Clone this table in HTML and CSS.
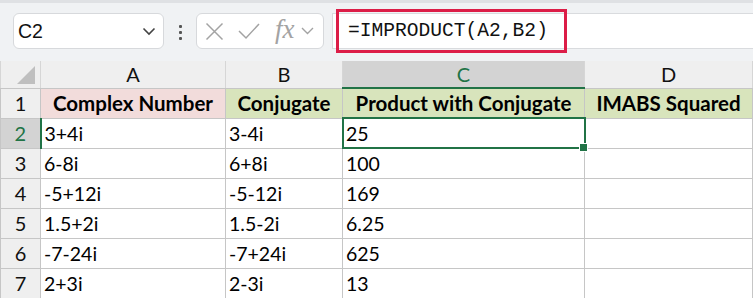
FILE: index.html
```html
<!DOCTYPE html>
<html>
<head>
<meta charset="utf-8">
<link rel="stylesheet" href="styles.css">
</head>
<body>
<div class="toolbar">
  <div class="namebox">
    <span class="nb-text">C2</span>
    <svg class="chev" width="14" height="9" viewBox="0 0 14 9"><path d="M1.5 1.5 L7 7 L12.5 1.5" fill="none" stroke="#444" stroke-width="1.6"/></svg>
  </div>
  <div class="dots"><i></i><i></i><i></i></div>
  <div class="fxbox">
    <svg width="19" height="19" viewBox="0 0 19 19"><path d="M1.5 1.5 L17.5 17.5 M17.5 1.5 L1.5 17.5" stroke="#a3a3a3" stroke-width="1.5" fill="none"/></svg>
    <svg width="22" height="18" viewBox="0 0 22 18"><path d="M1 9 L8 16 L21 2" stroke="#a3a3a3" stroke-width="1.5" fill="none"/></svg>
    <span class="fx">fx</span>
    <svg class="fxchev" width="13" height="8" viewBox="0 0 13 8"><path d="M1 1 L6.5 6.5 L12 1" fill="none" stroke="#a3a3a3" stroke-width="1.4"/></svg>
  </div>
  <div class="formula">
    <div class="formula-hl">=IMPRODUCT(A2,B2)</div>
  </div>
</div>
<table class="sheet">
  <colgroup>
    <col class="c-rh"><col class="c-a"><col class="c-b"><col class="c-c"><col class="c-d"><col class="c-e">
  </colgroup>
  <tr class="colhead">
    <th class="corner"><span class="tri"></span></th>
    <th>A</th><th>B</th><th class="sel">C</th><th>D</th><th></th>
  </tr>
  <tr>
    <th class="rh">1</th>
    <td class="hd pink">Complex Number</td>
    <td class="hd green">Conjugate</td>
    <td class="hd green">Product with Conjugate</td>
    <td class="hd green">IMABS Squared</td>
    <td></td>
  </tr>
  <tr>
    <th class="rh sel">2</th>
    <td>3+4i</td><td>3-4i</td><td class="active">25<span class="handle"></span></td><td></td><td></td>
  </tr>
  <tr>
    <th class="rh">3</th>
    <td>6-8i</td><td>6+8i</td><td>100</td><td></td><td></td>
  </tr>
  <tr>
    <th class="rh">4</th>
    <td>-5+12i</td><td>-5-12i</td><td>169</td><td></td><td></td>
  </tr>
  <tr>
    <th class="rh">5</th>
    <td>1.5+2i</td><td>1.5-2i</td><td>6.25</td><td></td><td></td>
  </tr>
  <tr>
    <th class="rh">6</th>
    <td>-7-24i</td><td>-7+24i</td><td>625</td><td></td><td></td>
  </tr>
  <tr>
    <th class="rh">7</th>
    <td>2+3i</td><td>2-3i</td><td>13</td><td></td><td></td>
  </tr>
</table>
</body>
</html>
```
FILE: styles.css
```css
* { box-sizing: border-box; }
html, body { margin: 0; padding: 0; }
body {
  width: 753px;
  height: 298px;
  overflow: hidden;
  background: #ffffff;
  font-family: Lato, "Open Sans", sans-serif;
}
.toolbar {
  height: 61px;
  background: #f0f2f4;
  border-top: 3px solid #dfe1e4;
  display: flex;
  align-items: flex-start;
  padding-top: 10px;
  padding-left: 13px;
}
.namebox {
  width: 151px;
  height: 36px;
  background: #fff;
  border: 1px solid #d7d9dc;
  border-radius: 6px;
  display: flex;
  align-items: center;
  justify-content: space-between;
  padding: 0 7px 0 4px;
  font-family: "Liberation Sans", Arial, sans-serif;
  font-size: 19.5px;
  color: #111;
}
.dots {
  width: 32px;
  display: flex;
  flex-direction: column;
  align-items: center;
  gap: 3px;
  padding-top: 12px;
}
.dots i { display: block; width: 3px; height: 3px; background: #555; border-radius: 1px; }
.fxbox {
  width: 128px;
  height: 36px;
  background: #fff;
  border: 1px solid #d7d9dc;
  border-radius: 6px;
  display: flex;
  align-items: center;
  padding-left: 8px;
  gap: 14px;
}
.fx {
  font-family: "Liberation Serif", serif;
  font-style: italic;
  font-size: 27px;
  line-height: 1;
  color: #a3a3a3;
  margin-left: 1px;
  margin-top: -3px;
}
.fxchev { margin-left: -8px; }
.formula {
  flex: 1;
  margin-left: 8px;
  height: 36px;
  background: #fff;
  border-top: 1px solid #d9dbde;
  border-bottom: 1px solid #d9dbde;
  border-left: 1px solid #d9dbde;
  position: relative;
}
.formula-hl {
  position: absolute;
  left: 3px;
  top: -5px;
  width: 231px;
  height: 44px;
  border: 3px solid #dc1d47;
  font-family: "Liberation Mono", "DejaVu Sans Mono", monospace;
  font-size: 19.6px;
  color: #111;
  padding-left: 9px;
  line-height: 38px;
}
.sheet {
  border-collapse: collapse;
  table-layout: fixed;
  width: 760px;
}
.c-rh { width: 40px; }
.c-a { width: 185px; }
.c-b { width: 117px; }
.c-c { width: 242px; }
.c-d { width: 168px; }
.c-e { width: 8px; }
.sheet th, .sheet td {
  border: 1px solid #c6c6c6;
  padding: 0;
  white-space: nowrap;
  overflow: hidden;
}
.colhead th {
  height: 27px;
  background: #efefef;
  font-weight: normal;
  font-size: 20px;
  color: #111;
  border-top: none;
  border-color: #d6d6d6;
  border-bottom-color: #c6c6c6;
}
.colhead th.sel {
  background: #d3d3d3;
  color: #217346;
  border-bottom: 2px solid #217346;
}
.corner { position: relative; border-left: none; }
.tri {
  position: absolute;
  right: 5px;
  bottom: 4px;
  width: 0; height: 0;
  border-left: 18px solid transparent;
  border-bottom: 18px solid #bfbfbf;
}
.rh {
  background: #efefef;
  font-weight: normal;
  font-size: 20px;
  color: #111;
  text-align: center;
  border-left: none;
  height: 30px;
}
.rh.sel {
  background: #d3d3d3;
  color: #217346;
  border-right: 2px solid #217346;
}
.sheet td {
  height: 30px;
  font-size: 19.5px;
  color: #000;
  padding-left: 3px;
  vertical-align: middle;
}
.sheet td.hd {
  font-weight: bold;
  font-size: 20.5px;
  text-align: center;
  padding-left: 0;
}
.pink { background: #f2dcdb; }
.green { background: #d8e4bc; }
td.active {
  position: relative;
  overflow: visible;
  outline: 2px solid #217346;
  outline-offset: -1px;
}
.handle {
  position: absolute;
  right: -4px;
  bottom: -4px;
  width: 7px;
  height: 7px;
  background: #217346;
  border: 1px solid #fff;
  box-sizing: content-box;
  z-index: 2;
}
```
